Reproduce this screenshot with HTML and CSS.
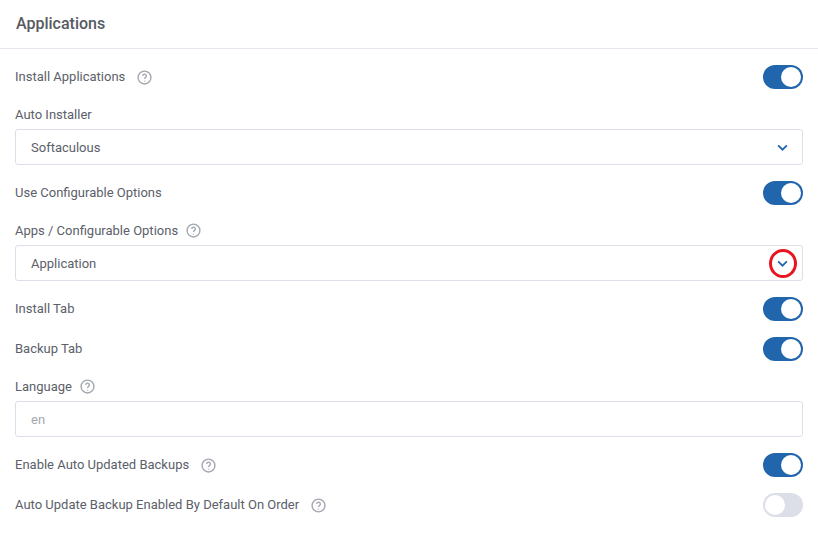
FILE: index.html
```html
<!DOCTYPE html>
<html lang="en">
<head>
    <meta charset="UTF-8">
    <meta name="viewport" content="width=device-width, initial-scale=1.0">
    <link rel="stylesheet" href="styles.css">
    <title>Applications</title>
</head>
<body>
    <div class="card">
        <h1 class="card-title">Applications</h1>
        <div class="card-body">
            <div class="row">
                <span class="row-label">Install Applications</span>
                <svg class="help" viewBox="0 0 14 14"><circle cx="7" cy="7" r="6"/><path d="M5.3 5.5a1.7 1.7 0 1 1 2.6 1.5c-.6.4-.9.7-.9 1.4"/><path d="M7 10v.8"/></svg>
                <span class="toggle on"></span>
            </div>
            <div class="field">
                <label class="field-label">Auto Installer</label>
                <div class="select">
                    <span>Softaculous</span>
                    <svg class="chevron" viewBox="0 0 10 6"><path d="M1 1l4 4 4-4"/></svg>
                </div>
            </div>
            <div class="row">
                <span class="row-label">Use Configurable Options</span>
                <span class="toggle on"></span>
            </div>
            <div class="field">
                <label class="field-label">Apps / Configurable Options
                    <svg class="help" viewBox="0 0 14 14"><circle cx="7" cy="7" r="6"/><path d="M5.3 5.5a1.7 1.7 0 1 1 2.6 1.5c-.6.4-.9.7-.9 1.4"/><path d="M7 10v.8"/></svg>
                </label>
                <div class="select">
                    <span>Application</span>
                    <svg class="chevron" viewBox="0 0 10 6"><path d="M1 1l4 4 4-4"/></svg>
                    <span class="highlight"></span>
                </div>
            </div>
            <div class="row">
                <span class="row-label">Install Tab</span>
                <span class="toggle on"></span>
            </div>
            <div class="row">
                <span class="row-label">Backup Tab</span>
                <span class="toggle on"></span>
            </div>
            <div class="field">
                <label class="field-label">Language
                    <svg class="help" viewBox="0 0 14 14"><circle cx="7" cy="7" r="6"/><path d="M5.3 5.5a1.7 1.7 0 1 1 2.6 1.5c-.6.4-.9.7-.9 1.4"/><path d="M7 10v.8"/></svg>
                </label>
                <input class="input" type="text" placeholder="en">
            </div>
            <div class="row">
                <span class="row-label">Enable Auto Updated Backups</span>
                <svg class="help" viewBox="0 0 14 14"><circle cx="7" cy="7" r="6"/><path d="M5.3 5.5a1.7 1.7 0 1 1 2.6 1.5c-.6.4-.9.7-.9 1.4"/><path d="M7 10v.8"/></svg>
                <span class="toggle on"></span>
            </div>
            <div class="row">
                <span class="row-label">Auto Update Backup Enabled By Default On Order</span>
                <svg class="help" viewBox="0 0 14 14"><circle cx="7" cy="7" r="6"/><path d="M5.3 5.5a1.7 1.7 0 1 1 2.6 1.5c-.6.4-.9.7-.9 1.4"/><path d="M7 10v.8"/></svg>
                <span class="toggle"></span>
            </div>
        </div>
    </div>
</body>
</html>
```

FILE: styles.css
```css
html, body {
    margin: 0;
    padding: 0;
    background: #fff;
    font-family: Roboto, "Liberation Sans", sans-serif;
    font-size: 13px;
    color: #5b606a;
}

.card {
    width: 818px;
    height: 547px;
    box-sizing: border-box;
}

.card-title {
    margin: 0;
    height: 48px;
    box-sizing: content-box;
    padding-left: 16px;
    line-height: 48px;
    font-size: 16px;
    font-weight: 500;
    color: #565a61;
    border-bottom: 1px solid #e6e8ef;
}

.card-body {
    padding: 8px 15px 0;
}

.row {
    display: flex;
    align-items: center;
    height: 40px;
}

.row-label {
    line-height: 20px;
}

.help {
    width: 15px;
    height: 15px;
    margin-left: 12px;
    fill: none;
    stroke: #a3a7b0;
    stroke-width: 1.3;
    vertical-align: -3px;
}

.toggle {
    position: relative;
    width: 40px;
    height: 24px;
    margin-left: auto;
    border-radius: 12px;
    background: #dcdfe8;
}

.toggle::after {
    content: "";
    position: absolute;
    top: 2px;
    left: 2px;
    width: 20px;
    height: 20px;
    border-radius: 50%;
    background: #fff;
}

.toggle.on {
    background: #2166ad;
}

.toggle.on::after {
    left: 18px;
}

.field {
    margin: 8px 0;
}

.field-label {
    display: block;
    height: 20px;
    line-height: 20px;
    margin-bottom: 4px;
}

.field-label .help {
    margin-left: 5px;
}

.select, .input {
    display: flex;
    align-items: center;
    justify-content: space-between;
    position: relative;
    width: 100%;
    height: 36px;
    box-sizing: border-box;
    padding: 0 15px;
    border: 1px solid #dcdfe8;
    border-radius: 3px;
    background: #fff;
    font-family: inherit;
    font-size: 13px;
    color: #5b606a;
}

.input::placeholder {
    color: #a3a7b0;
    opacity: 1;
}

.chevron {
    width: 11px;
    height: 7px;
    margin-right: -1px;
    fill: none;
    stroke: #2166ad;
    stroke-width: 1.6;
}

.highlight {
    position: absolute;
    top: 3px;
    right: 5px;
    width: 28px;
    height: 29px;
    box-sizing: border-box;
    border: 3px solid #e8141f;
    border-radius: 50%;
}
```
